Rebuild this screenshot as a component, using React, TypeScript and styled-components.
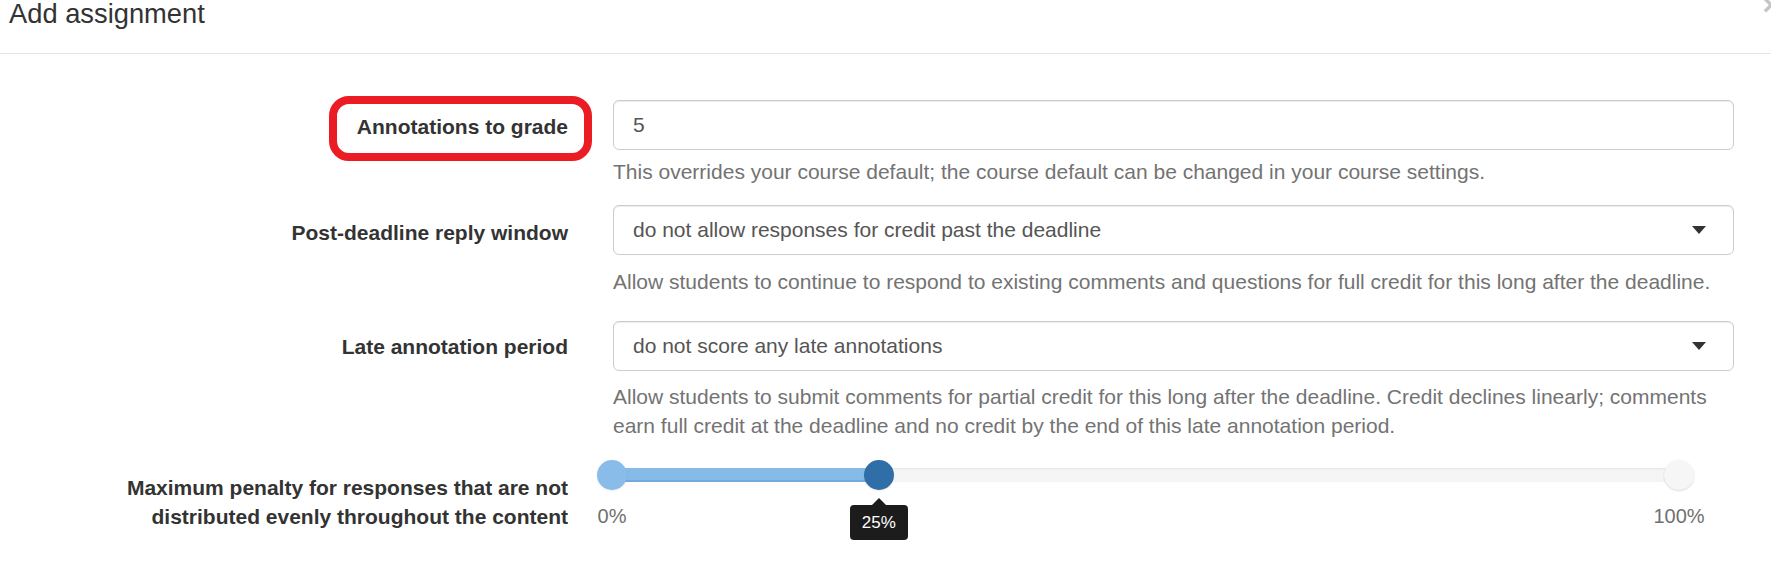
import { styled, createGlobalStyle } from 'styled-components'

const GlobalStyle = createGlobalStyle`
  html, body {
    margin: 0;
    padding: 0;
    background: #fff;
  }
  body {
    font-family: "Liberation Sans", Arial, sans-serif;
    color: #333;
    overflow: hidden;
  }
`

const PENALTY = 25

function App() {
  return (
    <StyledModal>
      <GlobalStyle />
      <StyledHeader>
        <StyledTitle>Add assignment</StyledTitle>
        <StyledClose>×</StyledClose>
      </StyledHeader>
      <StyledBody>
        <StyledRow $gap={19}>
          <StyledLabel $top={12}>
            <StyledHighlight>Annotations to grade</StyledHighlight>
          </StyledLabel>
          <div>
            <StyledInput defaultValue="5" readOnly />
            <StyledHelp $top={7}>
              This overrides your course default; the course default can be changed in your course settings.
            </StyledHelp>
          </div>
        </StyledRow>

        <StyledRow $gap={24}>
          <StyledLabel $top={13}>Post-deadline reply window</StyledLabel>
          <div>
            <StyledSelect>
              <span>do not allow responses for credit past the deadline</span>
              <Caret />
            </StyledSelect>
            <StyledHelp $top={12}>
              Allow students to continue to respond to existing comments and questions for full credit for this long
              after the deadline.
            </StyledHelp>
          </div>
        </StyledRow>

        <StyledRow $gap={22}>
          <StyledLabel $top={11}>Late annotation period</StyledLabel>
          <div>
            <StyledSelect>
              <span>do not score any late annotations</span>
              <Caret />
            </StyledSelect>
            <StyledHelp $top={11}>
              Allow students to submit comments for partial credit for this long after the deadline. Credit declines
              linearly; comments earn full credit at the deadline and no credit by the end of this late annotation
              period.
            </StyledHelp>
          </div>
        </StyledRow>

        <StyledRow $gap={0}>
          <StyledLabel $top={10}>
            Maximum penalty for responses that are not
            <br />
            distributed evenly throughout the content
          </StyledLabel>
          <StyledSliderControl>
            <StyledSlider>
              <StyledFill style={{ width: `${PENALTY}%` }} />
              <StyledHandle $kind="start" style={{ left: '0%' }} />
              <StyledHandle $kind="active" style={{ left: `${PENALTY}%` }} />
              <StyledHandle $kind="end" style={{ left: '100%' }} />
              <StyledTooltip style={{ left: `${PENALTY}%` }}>{PENALTY}%</StyledTooltip>
            </StyledSlider>
            <StyledPips>
              <StyledPip style={{ left: '0%' }}>0%</StyledPip>
              <StyledPip style={{ left: '100%' }}>100%</StyledPip>
            </StyledPips>
          </StyledSliderControl>
        </StyledRow>
      </StyledBody>
    </StyledModal>
  )
}

function Caret() {
  return (
    <svg width="14" height="8" viewBox="0 0 14 8">
      <path d="M0 0 L14 0 L7 8 Z" fill="#333" />
    </svg>
  )
}

const StyledModal = styled.div`
  width: 1771px;
  height: 570px;
  background: #fff;
`

const StyledHeader = styled.div`
  position: relative;
  height: 53px;
  padding-left: 9px;
  border-bottom: 1px solid #e5e5e5;
`

const StyledTitle = styled.h4`
  margin: 0;
  font-size: 27.3px;
  line-height: 27px;
  font-weight: 400;
  color: #333;
`

const StyledClose = styled.span`
  position: absolute;
  top: -10px;
  right: -9px;
  font-size: 30px;
  font-weight: 700;
  line-height: 30px;
  color: #c4c4c4;
`

const StyledBody = styled.div`
  padding-top: 46px;
`

const StyledRow = styled.div<{ $gap: number }>`
  display: grid;
  grid-template-columns: 568px 1121px;
  column-gap: 45px;
  margin-bottom: ${(p) => p.$gap}px;
`

const StyledLabel = styled.label<{ $top: number }>`
  padding-top: ${(p) => p.$top}px;
  text-align: right;
  font-size: 21px;
  line-height: 29.4px;
  font-weight: 700;
  color: #333;
  white-space: nowrap;
`

const StyledHighlight = styled.span`
  position: relative;

  &::before {
    content: '';
    position: absolute;
    left: -28px;
    right: -24px;
    top: -19px;
    bottom: -23px;
    border: 8px solid #ec1c24;
    border-radius: 20px;
  }
`

const StyledInput = styled.input`
  display: block;
  box-sizing: border-box;
  width: 100%;
  height: 50px;
  margin: 0;
  padding: 0 19px;
  border: 1px solid #ccc;
  border-radius: 6px;
  font-family: inherit;
  font-size: 21px;
  color: #555;
  box-shadow: inset 0 1px 1px rgba(0, 0, 0, 0.075);
  outline: none;
`

const StyledSelect = styled.div`
  display: flex;
  align-items: center;
  justify-content: space-between;
  box-sizing: border-box;
  height: 50px;
  padding: 0 27px 0 19px;
  border: 1px solid #ccc;
  border-radius: 6px;
  font-size: 21px;
  color: #555;
  box-shadow: inset 0 1px 1px rgba(0, 0, 0, 0.075);
`

const StyledHelp = styled.p<{ $top: number }>`
  margin: ${(p) => p.$top}px 0 0;
  font-size: 21px;
  line-height: 29.4px;
  color: #737373;
`

const StyledSliderControl = styled.div`
  padding-top: 5px;
`

const StyledSlider = styled.div`
  position: relative;
  width: 1067px;
  height: 14px;
  margin-left: -1px;
  border-radius: 7px;
  background: #f5f5f5;
  box-shadow: inset 0 1px 2px rgba(0, 0, 0, 0.08);
`

const StyledFill = styled.div`
  height: 100%;
  background: #86bbe8;
  box-shadow: inset 0 -2px 0 rgba(40, 90, 150, 0.18);
`

const handleColors = {
  start: '#89bce8',
  active: '#2f6ea6',
  end: '#f6f6f6',
}

const StyledHandle = styled.div<{ $kind: 'start' | 'active' | 'end' }>`
  position: absolute;
  top: -8px;
  width: 30px;
  height: 30px;
  margin-left: -15px;
  border-radius: 50%;
  background: ${(p) => handleColors[p.$kind]};
  box-shadow: 0 1px 2px rgba(0, 0, 0, ${(p) => (p.$kind === 'end' ? 0.15 : 0.08)});
`

const StyledTooltip = styled.div`
  position: absolute;
  top: 37px;
  width: 58px;
  height: 35px;
  transform: translateX(-50%);
  border-radius: 4px;
  background: #1c1c1c;
  color: #fff;
  font-size: 17px;
  line-height: 35px;
  text-align: center;

  &::before {
    content: '';
    position: absolute;
    top: -7px;
    left: 50%;
    margin-left: -7px;
    border-style: solid;
    border-width: 0 7px 7px;
    border-color: transparent transparent #1c1c1c;
  }
`

const StyledPips = styled.div`
  position: relative;
  width: 1067px;
  height: 30px;
  margin: 19px 0 0 -1px;
`

const StyledPip = styled.span`
  position: absolute;
  top: 0;
  transform: translateX(-50%);
  font-size: 20px;
  line-height: 30px;
  color: #707070;
`

export default App
